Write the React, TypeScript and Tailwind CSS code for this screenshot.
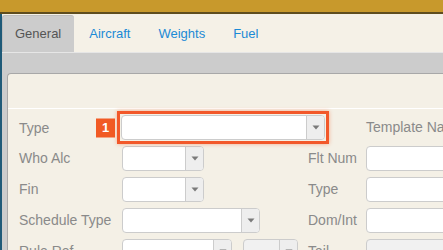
const FONT = "font-['Liberation_Sans',Arial,sans-serif]";

function Arrow() {
  return (
    <svg width="8" height="5" viewBox="0 0 8 5" className="block">
      <path d="M0.5 0.5 L7.5 0.5 L4 4.5 Z" fill="#7a7a7a" />
    </svg>
  );
}

function Select({ width, disabled }: { width: number; disabled?: boolean }) {
  return (
    <div
      className={`flex h-[25px] shrink-0 overflow-hidden rounded-[4px] border border-[#cccccc] ${
        disabled ? "bg-[#f1f1f1]" : "bg-white"
      }`}
      style={{ width }}
    >
      <div className="flex-1" />
      <div className="flex w-[18px] items-center justify-center border-l border-[#cccccc] bg-[#eeeeee]">
        <Arrow />
      </div>
    </div>
  );
}

function Input({ disabled }: { disabled?: boolean }) {
  return (
    <div
      className={`h-[25px] w-[110px] shrink-0 rounded-l-[4px] border border-[#cccccc] ${
        disabled ? "bg-[#f1f1f1]" : "bg-white"
      }`}
    />
  );
}

function Label({ children, w }: { children: React.ReactNode; w: number }) {
  return (
    <div className="shrink-0 whitespace-nowrap text-[14px] text-[#8a8a8a]" style={{ width: w }}>
      {children}
    </div>
  );
}

export default function App() {
  const tabs = ["General", "Aircraft", "Weights", "Fuel"];
  return (
    <div className={`relative h-[250px] w-[443px] overflow-hidden bg-[#cccccc] ${FONT}`}>
      <div className="h-[12px] bg-[#c8992c]" />
      <div className="h-[2px] bg-[#5f4d1e]" />
      <div className="flex h-[236px]">
        <div className="w-[2px] shrink-0 bg-[#1f5a78]" />
        <div className="flex min-w-0 flex-1 flex-col">
          {/* tab strip */}
          <div className="flex h-[38px] shrink-0 items-end gap-[2px] bg-[#f5f1e7]">
            {tabs.map((t, i) => (
              <div
                key={t}
                className={`flex h-[37px] items-center px-[13px] text-[13px] ${
                  i === 0
                    ? "rounded-t-[3px] border-l border-t border-[#bdbdbd] bg-[#cccccc] pl-[12px] text-[#555555]"
                    : "text-[#1b8ad6]"
                }`}
              >
                {t}
              </div>
            ))}
          </div>
          <div className="h-px shrink-0 bg-[#e6e6e6]" />
          {/* grey area */}
          <div className="flex-1 pl-[5px] pt-[20px]">
            <div className="h-full rounded-tl-[4px] border-l border-t border-[#a8a8a8] bg-[#f4f0e6]">
              <div className="h-[35px] border-b border-white" />
              <div className="flex flex-col gap-[6px] pl-[11px] pt-[6px]">
                {/* row 1 */}
                <div className="flex items-center">
                  <div className="relative w-[102px] shrink-0">
                    <span className="text-[14px] text-[#8a8a8a]">Type</span>
                    <div className="absolute right-[6px] top-1/2 flex h-[19px] w-[19px] -translate-y-1/2 items-center justify-center bg-[#f15a24] text-[13px] font-bold text-white">
                      1
                    </div>
                  </div>
                  <div className="relative">
                    <div className="pointer-events-none absolute -inset-[4px] border-[3px] border-[#f2582a] shadow-[0_0_4px_rgba(241,90,36,0.45)]" />
                    <Select width={204} />
                  </div>
                  <div className="ml-[41px] whitespace-nowrap text-[14px] text-[#8a8a8a]">Template Name</div>
                </div>
                {/* row 2 */}
                <div className="flex items-center">
                  <Label w={103}>Who Alc</Label>
                  <Select width={82} />
                  <div className="w-[104px] shrink-0" />
                  <Label w={58}>Flt Num</Label>
                  <Input />
                </div>
                {/* row 3 */}
                <div className="flex items-center">
                  <Label w={103}>Fin</Label>
                  <Select width={82} />
                  <div className="w-[104px] shrink-0" />
                  <Label w={58}>Type</Label>
                  <Input />
                </div>
                {/* row 4 */}
                <div className="flex items-center">
                  <Label w={103}>Schedule Type</Label>
                  <Select width={138} />
                  <div className="w-[48px] shrink-0" />
                  <Label w={58}>Dom/Int</Label>
                  <Input />
                </div>
                {/* row 5 */}
                <div className="flex items-center">
                  <Label w={103}>Rule Ref</Label>
                  <Select width={110} />
                  <div className="w-[11px] shrink-0" />
                  <Select width={55} disabled />
                  <div className="w-[10px] shrink-0" />
                  <Label w={58}>Tail</Label>
                  <Input disabled />
                </div>
              </div>
            </div>
          </div>
        </div>
      </div>
    </div>
  );
}
